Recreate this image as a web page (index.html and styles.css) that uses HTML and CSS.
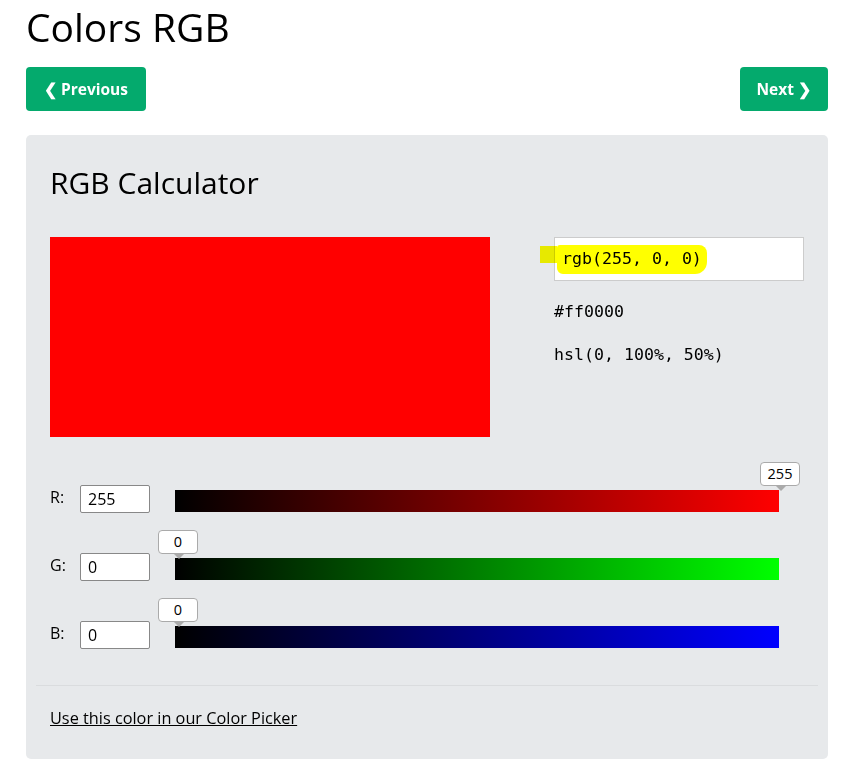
FILE: index.html
```html
<!DOCTYPE html>
<html lang="en">

<head>
  <meta charset="UTF-8">
  <meta name="viewport" content="width=device-width, initial-scale=1.0">
  <title>Colors RGB</title>
  <link rel="stylesheet" href="styles.css">
</head>

<body>

  <div class="allpage">
    <h1 class="pageTitle">Colors RGB</h1>

    <div class="navRow">
      <a class="navBtn" href="#">&#10094; Previous</a>
      <a class="navBtn" href="#">Next &#10095;</a>
    </div>

    <div class="panel">
      <h2 class="panelTitle">RGB Calculator</h2>

      <div class="preview">
        <div class="swatch"></div>
        <div class="codes">
          <div class="rgbBox"><span class="marker">rgb(255, 0, 0)</span></div>
          <p class="code">#ff0000</p>
          <p class="code">hsl(0, 100%, 50%)</p>
        </div>
      </div>

      <div class="sliders">
        <div class="sliderRow">
          <span class="chan">R:</span>
          <input class="chanInput" type="text" value="255">
          <div class="track red">
            <span class="tip" style="left: 585px">255</span>
          </div>
        </div>
        <div class="sliderRow">
          <span class="chan">G:</span>
          <input class="chanInput" type="text" value="0">
          <div class="track green">
            <span class="tip" style="left: -17px">0</span>
          </div>
        </div>
        <div class="sliderRow">
          <span class="chan">B:</span>
          <input class="chanInput" type="text" value="0">
          <div class="track blue">
            <span class="tip" style="left: -17px">0</span>
          </div>
        </div>
      </div>

      <hr class="divider">

      <a class="pickerLink" href="#">Use this color in our Color Picker</a>
    </div>
  </div>

</body>

</html>
```

FILE: styles.css
```css
* {
  margin: 0;
  padding: 0;
  box-sizing: border-box;
}

body {
  font-family: "Open Sans", "Noto Sans", sans-serif;
  color: #000;
  background: #fff;
}

.allpage {
  width: 857px;
  padding: 0 29px 0 26px;
}

.pageTitle {
  font-size: 39px;
  font-weight: 400;
  line-height: 54px;
}

.navRow {
  display: flex;
  justify-content: space-between;
  margin-top: 13px;
}

.navBtn {
  display: inline-block;
  background: #04aa6d;
  color: #fff;
  font-weight: 700;
  font-size: 15.5px;
  line-height: 44px;
  height: 44px;
  padding: 0 18px;
  border-radius: 4px;
  text-decoration: none;
}

.navBtn:last-child {
  padding: 0 17px;
}

.panel {
  margin-top: 24px;
  background: #e7e9eb;
  border-radius: 5px;
  padding: 28px 24px 30px 24px;
}

.panelTitle {
  font-size: 30px;
  font-weight: 400;
  line-height: 40px;
}

.preview {
  display: flex;
  justify-content: space-between;
  margin-top: 34px;
}

.swatch {
  width: 440px;
  height: 200px;
  background: #ff0000;
}

.codes {
  width: 250px;
  font-family: "DejaVu Sans Mono", monospace;
  font-size: 16.6px;
}

.rgbBox {
  height: 44px;
  background: #fff;
  border: 1px solid #cccccc;
  padding: 9px 0 0 7px;
}

/* highlighter mark, multiplied so it darkens over the grey */
.marker {
  position: relative;
  display: inline-block;
  line-height: 24px;
}

.marker::before {
  content: "";
  position: absolute;
  left: -5px;
  right: -5px;
  top: -2px;
  bottom: -3px;
  background: #ffff00;
  border-radius: 3px 8px 12px 6px;
  mix-blend-mode: multiply;
}

.marker::after {
  content: "";
  position: absolute;
  left: -22px;
  width: 17px;
  top: -1px;
  height: 17px;
  background: #ffff00;
  mix-blend-mode: multiply;
}

.code {
  margin-top: 19px;
  line-height: 24px;
}

.code + .code {
  margin-top: 19px;
}

.sliders {
  margin-top: 48px;
}

.sliderRow {
  display: flex;
  align-items: flex-start;
  height: 68px;
}

.chan {
  width: 30px;
  font-size: 16px;
  line-height: 24px;
}

.chanInput {
  width: 70px;
  height: 28px;
  border: 1px solid #888;
  border-radius: 2px;
  background: #fff;
  font-family: "Open Sans", "Noto Sans", sans-serif;
  font-size: 16px;
  padding: 0 7px;
}

.track {
  position: relative;
  width: 604px;
  height: 22px;
  margin-left: 25px;
  margin-top: 5px;
}

.red {
  background: linear-gradient(to right, #000, #ff0000);
}

.green {
  background: linear-gradient(to right, #000, #00ff00);
}

.blue {
  background: linear-gradient(to right, #000, #0000ff);
}

.tip {
  position: absolute;
  top: -28px;
  width: 40px;
  height: 24px;
  background: #fff;
  border: 1px solid #aaa;
  border-radius: 4px;
  font-size: 14.5px;
  line-height: 22px;
  text-align: center;
}

.tip::after {
  content: "";
  position: absolute;
  left: 15px;
  bottom: -6px;
  border-left: 5px solid transparent;
  border-right: 5px solid transparent;
  border-top: 5px solid #aaa;
}

.divider {
  border: none;
  border-top: 1px solid #dadcde;
  margin: 0 -14px;
  margin-top: -4px;
}

.pickerLink {
  display: inline-block;
  margin-top: 22px;
  color: #000;
  font-size: 16.3px;
  line-height: 20px;
  text-decoration: underline;
}
```
